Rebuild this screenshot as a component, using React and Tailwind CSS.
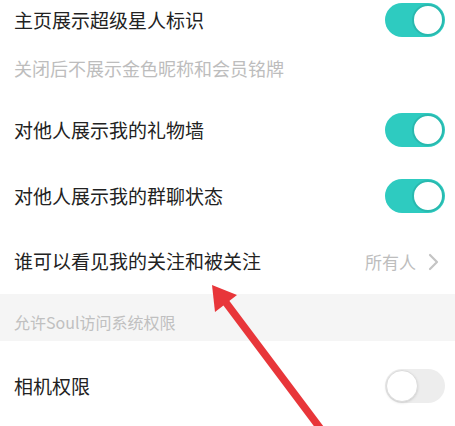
import React from 'react';

const FONT = { fontFamily: '"Noto Sans CJK SC", "Noto Sans", sans-serif' };

function Toggle({ on }) {
  if (on) {
    return (
      <div className="w-[60px] h-[34px] rounded-full bg-[#2ecbc0] flex items-center justify-end pr-[1px]">
        <div className="w-[32px] h-[32px] rounded-full bg-white border-[2px] border-[#29b9af]" />
      </div>
    );
  }
  return (
    <div className="w-[60px] h-[34px] rounded-full bg-[#ededed] flex items-center justify-start pl-[1px]">
      <div className="w-[32px] h-[32px] rounded-full bg-white border border-[#dcdcdc] shadow-sm" />
    </div>
  );
}

function Row({ title, on }) {
  return (
    <div className="h-[66px] flex items-center justify-between pl-[14px] pr-[10px]">
      <span className="text-[19px] text-[#222]">{title}</span>
      <Toggle on={on} />
    </div>
  );
}

export default function App() {
  return (
    <div className="relative w-[455px] h-[426px] bg-white overflow-hidden" style={FONT}>
      {/* first row with hint */}
      <div className="pt-[6px] pb-[17px]">
        <div className="h-[28px] flex items-center justify-between pl-[14px] pr-[10px]">
          <span className="text-[19px] text-[#222]">主页展示超级星人标识</span>
          <Toggle on />
        </div>
        <div className="mt-[22px] h-[24px] flex items-center pl-[14px]">
          <span className="text-[18px] text-[#bdbdbd]">关闭后不展示金色昵称和会员铭牌</span>
        </div>
      </div>

      <Row title="对他人展示我的礼物墙" on />
      <Row title="对他人展示我的群聊状态" on />

      <div className="h-[65px] flex items-center justify-between pl-[14px] pr-[16px]">
        <span className="text-[19px] text-[#222]">谁可以看见我的关注和被关注</span>
        <div className="flex items-center gap-[12px]">
          <span className="text-[17px] text-[#bdbdbd]">所有人</span>
          <svg width="11" height="18" viewBox="0 0 11 18" fill="none">
            <path d="M2 2l7 7-7 7" stroke="#c4c4c4" strokeWidth="2.2" strokeLinecap="round" strokeLinejoin="round" />
          </svg>
        </div>
      </div>

      {/* section band */}
      <div className="h-[47px] bg-[#f5f5f5] flex items-end pl-[14px] pb-[7px]">
        <span className="text-[16px] text-[#c0c0c0]">允许Soul访问系统权限</span>
      </div>

      <div className="h-[90px] flex items-center justify-between pl-[14px] pr-[10px]">
        <span className="text-[19px] text-[#222]">相机权限</span>
        <Toggle on={false} />
      </div>

      {/* red annotation arrow */}
      <svg className="absolute left-0 top-0 pointer-events-none" width="455" height="426" viewBox="0 0 455 426">
        <line x1="224" y1="300" x2="323" y2="432" stroke="#e8363a" strokeWidth="7.5" />
        <polygon points="212,285 237,295 215,312" fill="#e8363a" />
      </svg>
    </div>
  );
}
